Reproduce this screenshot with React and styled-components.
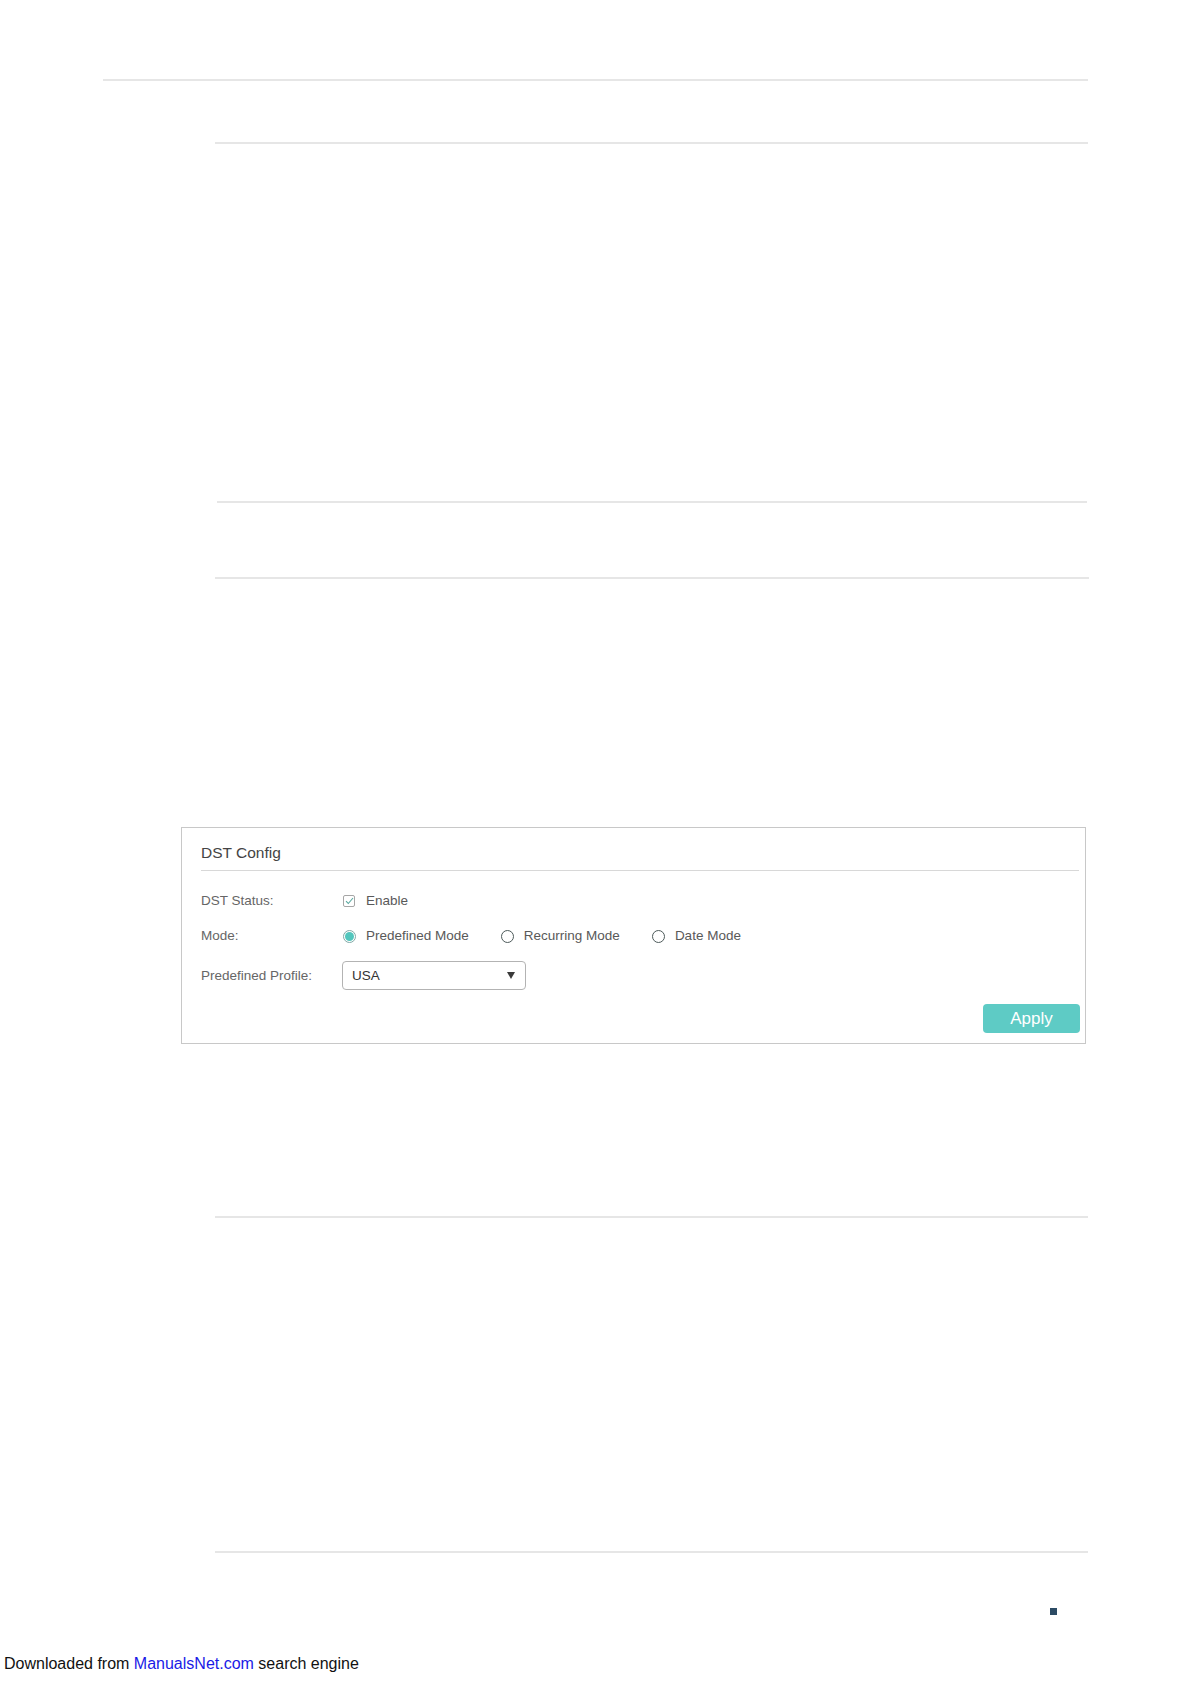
import React from "react";
import styled, { createGlobalStyle } from "styled-components";

const Global = createGlobalStyle`
  html, body { margin: 0; padding: 0; background: #fff; }
  body { font-family: "Liberation Sans", Arial, sans-serif; }
  * { box-sizing: border-box; }
`;

const Page = styled.div`
  width: 1191px;
  height: 1684px;
  display: flex;
  flex-direction: column;
  align-items: flex-start;
  background: #fff;
`;

const Rule = styled.div`
  height: 2px;
  background: #e6e6e6;
  margin-top: ${(p) => p.$top}px;
  margin-left: ${(p) => p.$left}px;
  width: ${(p) => p.$width}px;
`;

const Panel = styled.section`
  margin-top: ${(p) => p.$top}px;
  margin-left: 181px;
  width: 905px;
  height: 217px;
  border: 1px solid #c8c8c8;
  padding: 15px 5px 10px 19px;
  display: flex;
  flex-direction: column;
`;

const Title = styled.div`
  font-size: 15.5px;
  line-height: 20px;
  color: #444;
`;

const Divider = styled.div`
  height: 1px;
  background: #d8d8d8;
  margin-top: 7px;
  margin-right: 1px;
`;

const Form = styled.div`
  margin-top: 20px;
  display: grid;
  grid-template-columns: 142px 1fr;
  row-gap: 15px;
  align-items: center;
`;

const Label = styled.div`
  font-size: 13.5px;
  line-height: 20px;
  color: #666;
`;

const Controls = styled.div`
  display: flex;
  align-items: center;
  gap: 32px;
  min-height: 20px;
`;

const Option = styled.label`
  display: flex;
  align-items: center;
  gap: ${(p) => p.$gap}px;
  font-size: 13.5px;
  line-height: 20px;
  color: #595959;
`;

const Box = styled.span`
  width: 12px;
  height: 12px;
  border: 1px solid #a6a6a6;
  border-radius: 2px;
  display: flex;
  align-items: center;
  justify-content: center;
`;

const Radio = styled.span`
  width: 13px;
  height: 13px;
  border-radius: 50%;
  border: 1px solid ${(p) => (p.$on ? "#7fa9a6" : "#4d5a5a")};
  display: flex;
  align-items: center;
  justify-content: center;
  &::after {
    content: "";
    width: 9px;
    height: 9px;
    border-radius: 50%;
    background: ${(p) => (p.$on ? "#52c6bd" : "transparent")};
  }
`;

const Select = styled.div`
  width: 184px;
  height: 29px;
  margin-left: -1px;
  border: 1px solid #b3b3b3;
  border-radius: 4px;
  padding: 0 10px 0 9px;
  display: flex;
  align-items: center;
  justify-content: space-between;
  font-size: 13.5px;
  color: #333;
`;

const Arrow = styled.span`
  width: 0;
  height: 0;
  border-left: 4px solid transparent;
  border-right: 4px solid transparent;
  border-top: 7px solid #3a3a3a;
`;

const Footer = styled.div`
  flex: 1;
  align-self: stretch;
  display: flex;
  justify-content: flex-end;
  align-items: flex-end;
`;

const Apply = styled.button`
  width: 97px;
  height: 29px;
  border: none;
  border-radius: 4px;
  background: #5ecbc5;
  color: #fff;
  font-family: "Liberation Sans", Arial, sans-serif;
  font-size: 17px;
  padding: 0;
`;

const Marker = styled.div`
  margin-top: 55px;
  margin-left: 1050px;
  width: 7px;
  height: 7px;
  background: #2c4b64;
`;

const Download = styled.div`
  margin-top: 39px;
  margin-left: 4px;
  font-size: 16px;
  line-height: 19px;
  color: #111;
  a { color: #1a1ae6; text-decoration: none; }
`;

export default function App() {
  return (
    <Page>
      <Global />
      <Rule $top={79} $left={103} $width={985} />
      <Rule $top={61} $left={215} $width={873} />
      <Rule $top={357} $left={217} $width={870} />
      <Rule $top={74} $left={215} $width={874} />
      <Panel $top={248}>
        <Title>DST Config</Title>
        <Divider />
        <Form>
          <Label>DST Status:</Label>
          <Controls>
            <Option $gap={11}>
              <Box>
                <svg width="9" height="8" viewBox="0 0 9 8">
                  <polyline points="1,4.2 3.3,6.5 8,1" fill="none" stroke="#5aa9a0" strokeWidth="1.1" />
                </svg>
              </Box>
              Enable
            </Option>
          </Controls>
          <Label>Mode:</Label>
          <Controls>
            <Option $gap={10}>
              <Radio $on />
              Predefined Mode
            </Option>
            <Option $gap={10}>
              <Radio />
              Recurring Mode
            </Option>
            <Option $gap={10}>
              <Radio />
              Date Mode
            </Option>
          </Controls>
          <Label>Predefined Profile:</Label>
          <Controls>
            <Select>
              USA
              <Arrow />
            </Select>
          </Controls>
        </Form>
        <Footer>
          <Apply>Apply</Apply>
        </Footer>
      </Panel>
      <Rule $top={172} $left={215} $width={873} />
      <Rule $top={333} $left={215} $width={873} />
      <Marker />
      <Download>
        Downloaded from <a href="#">ManualsNet.com</a> search engine
      </Download>
    </Page>
  );
}
